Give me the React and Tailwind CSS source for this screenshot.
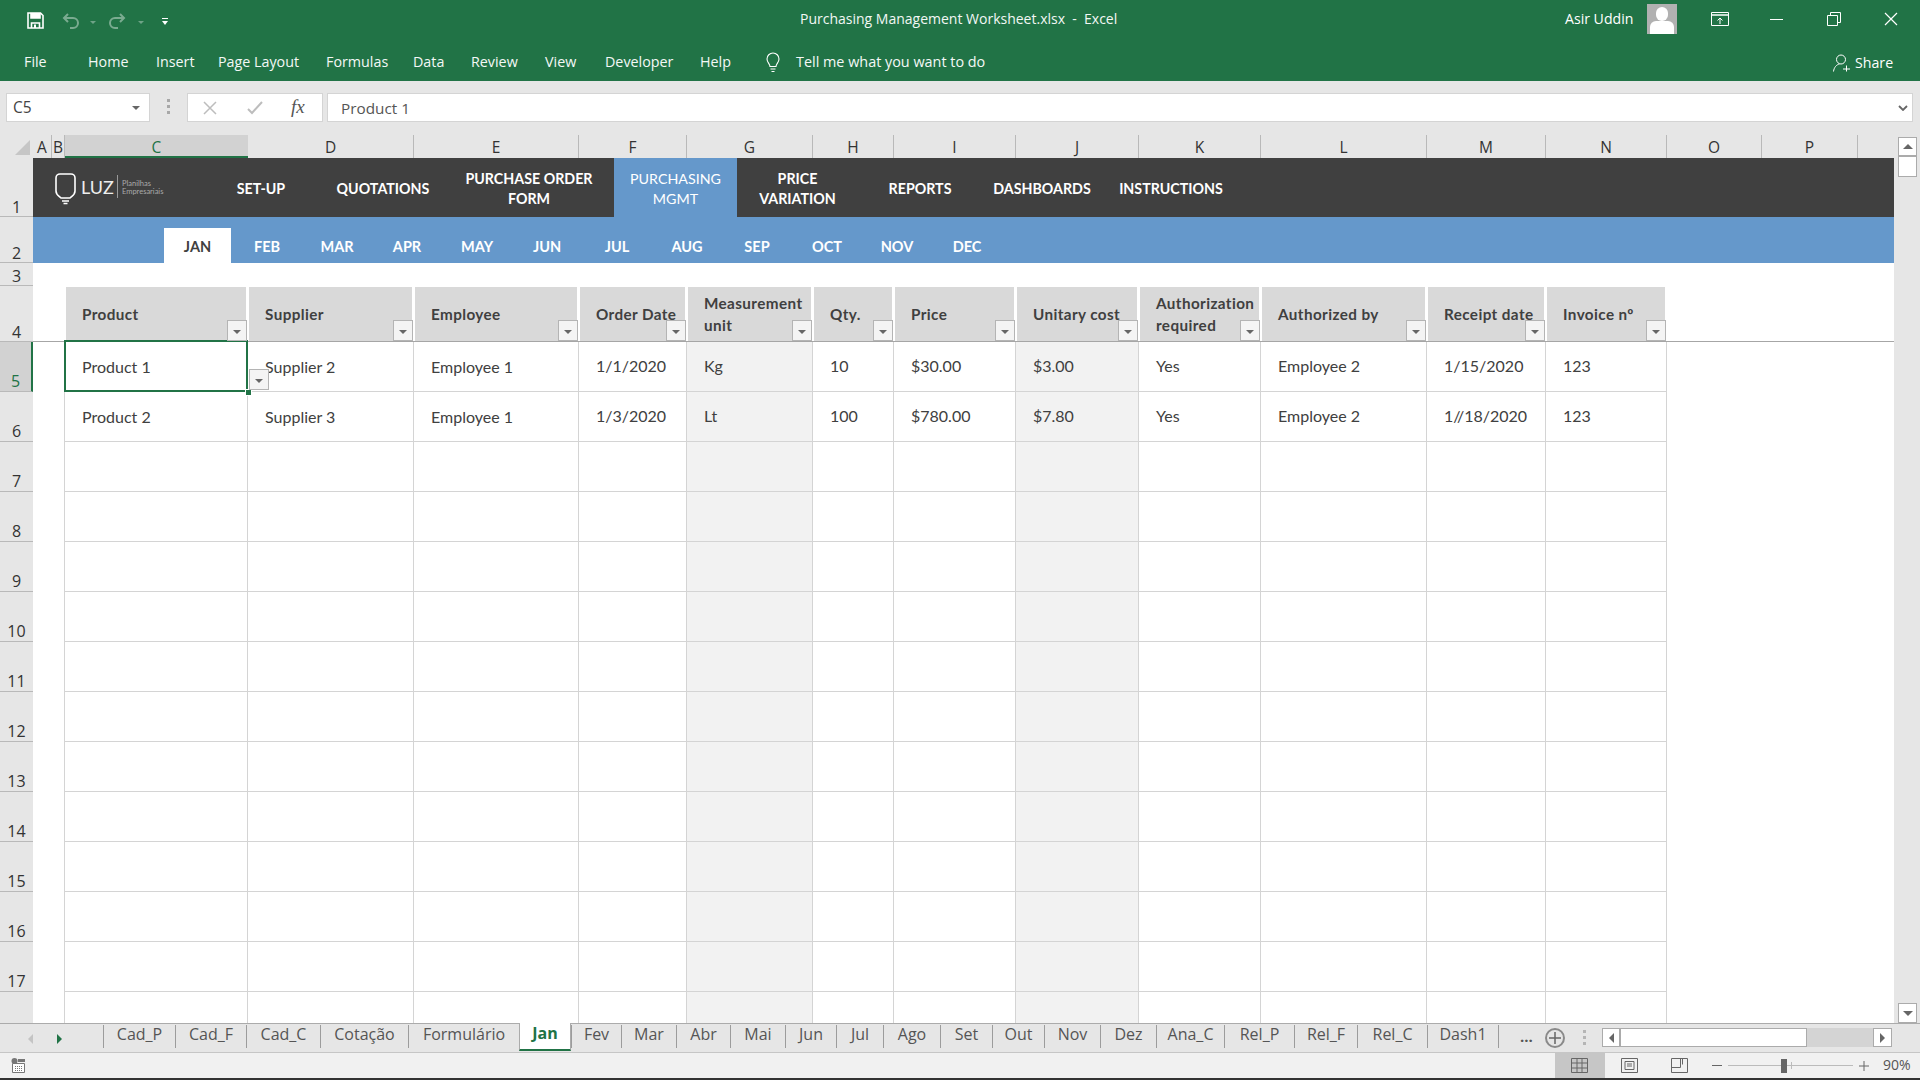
const font = { fontFamily: '"Open Sans", "Noto Sans", sans-serif' };

const ribbon = [
  ["File", "w-[64px]"],
  ["Home", "w-[68px]"],
  ["Insert", "w-[62px]"],
  ["Page Layout", "w-[108px]"],
  ["Formulas", "w-[87px]"],
  ["Data", "w-[58px]"],
  ["Review", "w-[74px]"],
  ["View", "w-[60px]"],
  ["Developer", "w-[95px]"],
  ["Help", "w-[65px]"],
];

const columns = [
  ["A", "w-[19px]"],
  ["B", "w-[13px]"],
  ["C", "w-[183px]"],
  ["D", "w-[166px]"],
  ["E", "w-[165px]"],
  ["F", "w-[108px]"],
  ["G", "w-[126px]"],
  ["H", "w-[81px]"],
  ["I", "w-[122px]"],
  ["J", "w-[123px]"],
  ["K", "w-[122px]"],
  ["L", "w-[166px]"],
  ["M", "w-[119px]"],
  ["N", "w-[121px]"],
  ["O", "w-[95px]"],
  ["P", "w-[96px]"],
];

const nav = [
  ["SET-UP", "w-[122px]"],
  ["QUOTATIONS", "w-[122px]"],
  ["PURCHASE ORDER\nFORM", "w-[170px]"],
  ["PURCHASING\nMGMT", "w-[123px] bg-[#6598cb] font-normal"],
  ["PRICE\nVARIATION", "w-[121px]"],
  ["REPORTS", "w-[124px]"],
  ["DASHBOARDS", "w-[120px]"],
  ["INSTRUCTIONS", "w-[138px]"],
];

const months = ["FEB", "MAR", "APR", "MAY", "JUN", "JUL", "AUG", "SEP", "OCT", "NOV", "DEC"];

const headers = [
  "Product",
  "Supplier",
  "Employee",
  "Order Date",
  "Measurement\nunit",
  "Qty.",
  "Price",
  "Unitary cost",
  "Authorization\nrequired",
  "Authorized by",
  "Receipt date",
  "Invoice nº",
];

const rows = [
  ["Product 1", "Supplier 2", "Employee 1", "1/1/2020", "Kg", "10", "$30.00", "$3.00", "Yes", "Employee 2", "1/15/2020", "123"],
  ["Product 2", "Supplier 3", "Employee 1", "1/3/2020", "Lt", "100", "$780.00", "$7.80", "Yes", "Employee 2", "1//18/2020", "123"],
];

const tabs = [
  ["Cad_P", "w-[72px]"],
  ["Cad_F", "w-[71px]"],
  ["Cad_C", "w-[74px]"],
  ["Cotação", "w-[88px]"],
  ["Formulário", "w-[111px]"],
  ["Jan", "w-[52px]"],
  ["Fev", "w-[50px]"],
  ["Mar", "w-[55px]"],
  ["Abr", "w-[54px]"],
  ["Mai", "w-[55px]"],
  ["Jun", "w-[51px]"],
  ["Jul", "w-[47px]"],
  ["Ago", "w-[57px]"],
  ["Set", "w-[52px]"],
  ["Out", "w-[52px]"],
  ["Nov", "w-[56px]"],
  ["Dez", "w-[56px]"],
  ["Ana_C", "w-[68px]"],
  ["Rel_P", "w-[70px]"],
  ["Rel_F", "w-[63px]"],
  ["Rel_C", "w-[70px]"],
  ["Dash1", "w-[72px]"],
];

const gridCols = "grid grid-cols-[183px_166px_165px_108px_126px_81px_122px_123px_122px_166px_119px_121px]";

function Arrow({ className = "" }) {
  return <div className={"w-0 h-0 border-x-[4px] border-x-transparent border-t-[4px] border-t-[#666] " + className} />;
}

function FilterButton({ className = "" }) {
  return (
    <div className={"absolute w-[20px] h-[21px] bg-[#f4f4f4] border border-[#b4b4b4] flex items-center justify-center " + className}>
      <Arrow className="mt-[2px]" />
    </div>
  );
}

function TitleBar() {
  return (
    <div className="h-[81px] bg-[#217346] text-white relative shrink-0">
      <svg className="absolute left-[27px] top-[12px]" width="17" height="17" viewBox="0 0 17 17" fill="none" stroke="#fff" strokeWidth="1.6">
        <path d="M1 1h12.5L16 3.5V16H1z" />
        <path d="M4 1v5h9V1" fill="#fff" />
        <path d="M4.5 16v-5h8v5" />
        <path d="M7 12.5h2v3.5H7z" fill="#fff" stroke="none" />
      </svg>
      <svg className="absolute left-[62px] top-[13px] opacity-40" width="18" height="16" viewBox="0 0 18 16" fill="none" stroke="#fff" strokeWidth="2">
        <path d="M6 1L2 5l4 4" />
        <path d="M2 5h9a5 5 0 0 1 0 10H8" />
      </svg>
      <svg className="absolute left-[108px] top-[13px] opacity-40" width="18" height="16" viewBox="0 0 18 16" fill="none" stroke="#fff" strokeWidth="2">
        <path d="M12 1l4 4-4 4" />
        <path d="M16 5H7a5 5 0 0 0 0 10h3" />
      </svg>
      <div className="absolute left-[90px] top-[21px] w-0 h-0 border-x-[3px] border-x-transparent border-t-[3px] border-t-[#6fa387]" />
      <div className="absolute left-[138px] top-[21px] w-0 h-0 border-x-[3px] border-x-transparent border-t-[3px] border-t-[#6fa387]" />
      <div className="absolute left-[162px] top-[18px] w-[6px] h-[1px] bg-white" />
      <div className="absolute left-[162px] top-[21px] w-0 h-0 border-x-[3px] border-x-transparent border-t-[4px] border-t-white" />

      <div className="absolute left-[800px] top-[9px] text-[14px] leading-[20px] whitespace-pre text-[#f2f7f4]">
        Purchasing Management Worksheet.xlsx  -  Excel
      </div>
      <div className="absolute left-[1565px] top-[9px] text-[14.100px] leading-[20px]">Asir Uddin</div>
      <div className="absolute left-[1647px] top-[4px] w-[30px] h-[30px] bg-[#b1b1b1] overflow-hidden">
        <div className="absolute left-[9px] top-[3px] w-[12px] h-[14px] rounded-full bg-white" />
        <div className="absolute left-[3px] top-[17px] w-[24px] h-[13px] rounded-t-[6px] bg-white" />
      </div>
      <svg className="absolute left-[1711px] top-[12px]" width="18" height="14" viewBox="0 0 18 14" fill="none" stroke="#fff" strokeWidth="1">
        <path d="M.5 .5h17v13H.5z" />
        <path d="M.5 3h17" strokeWidth="1.5" />
        <path d="M9 12V6M6.5 8.5L9 6l2.500 2.500" />
      </svg>
      <div className="absolute left-[1770px] top-[19px] w-[13px] h-[1px] bg-white" />
      <svg className="absolute left-[1827px] top-[12px]" width="14" height="14" viewBox="0 0 14 14" fill="none" stroke="#fff" strokeWidth="1">
        <path d="M.5 3.500h10v10H.5z" />
        <path d="M3.500 3.500V.5h10v10h-3" />
      </svg>
      <svg className="absolute left-[1884px] top-[12px]" width="14" height="14" viewBox="0 0 14 14" fill="none" stroke="#fff" strokeWidth="1.2">
        <path d="M1 1l12 12M13 1L1 13" />
      </svg>

      <div className="absolute left-[24px] top-[51px] flex text-[14.300px] leading-[22px] text-[#f4f8f6]">
        {ribbon.map(([label, w]) => (
          <div key={label} className={w}>{label}</div>
        ))}
      </div>
      <svg className="absolute left-[765px] top-[52px]" width="16" height="21" viewBox="0 0 16 21" fill="none" stroke="#fff" strokeWidth="1.1">
        <path d="M5 14.500C5 12 2 10.500 2 7a6 6 0 0 1 12 0c0 3.500-3 5-3 7.500z" />
        <path d="M5.500 17h5M6.500 19.500h3" />
      </svg>
      <div className="absolute left-[796px] top-[51px] text-[14.400px] leading-[22px] text-[#f4f8f6]">Tell me what you want to do</div>
      <svg className="absolute left-[1833px] top-[54px]" width="18" height="18" viewBox="0 0 18 18" fill="none" stroke="#fff" strokeWidth="1">
        <circle cx="8" cy="5.500" r="4.500" />
        <path d="M.5 17.500c.5-4 3-7 6-7.500M10 15h7M13.500 11.500v6" />
      </svg>
      <div className="absolute left-[1855px] top-[52px] text-[14.200px] leading-[22px]">Share</div>
    </div>
  );
}

function FormulaBar() {
  return (
    <div className="h-[54px] shrink-0 relative bg-[#e6e6e6]">
      <div className="absolute left-[6px] top-[12px] w-[144px] h-[29px] bg-white border border-[#d4d4d4] flex items-center justify-between pl-[6px] pr-[9px] pt-[1px] text-[15.500px] text-[#444]">
        <span>C5</span>
        <Arrow />
      </div>
      <div className="absolute left-[167px] top-[18px] flex flex-col gap-[3px]">
        <div className="w-[3px] h-[3px] bg-[#a8a8a8]" />
        <div className="w-[3px] h-[3px] bg-[#a8a8a8]" />
        <div className="w-[3px] h-[3px] bg-[#a8a8a8]" />
      </div>
      <div className="absolute left-[187px] top-[12px] w-[136px] h-[29px] bg-white border border-[#d4d4d4]">
        <svg className="absolute left-[15px] top-[7px]" width="14" height="14" viewBox="0 0 14 14" fill="none" stroke="#bdbdbd" strokeWidth="1.500">
          <path d="M1 1l12 12M13 1L1 13" />
        </svg>
        <svg className="absolute left-[59px] top-[7px]" width="16" height="14" viewBox="0 0 16 14" fill="none" stroke="#bdbdbd" strokeWidth="2">
          <path d="M1 8l4 4L15 1" />
        </svg>
        <span className="absolute left-[103px] top-[2px] text-[#555] text-[19px] italic leading-[22px]" style={{ fontFamily: '"Liberation Serif", serif' }}>fx</span>
      </div>
      <div className="absolute left-[327px] top-[12px] right-[7px] h-[29px] bg-white border border-[#d4d4d4] flex items-center justify-between pl-[13px] pr-[4px] pt-[1px] text-[15.300px] text-[#555]">
        <span>Product 1</span>
        <svg width="10" height="6" viewBox="0 0 10 6" fill="none" stroke="#666" strokeWidth="1.800">
          <path d="M1 1l4 4 4-4" />
        </svg>
      </div>
    </div>
  );
}

function ColumnHeaders() {
  return (
    <div className="h-[23px] shrink-0 flex relative bg-[#e6e6e6] text-[15.500px] leading-[24px] text-[#333]">
      <div className="w-[33px] relative">
        <div className="absolute left-[15px] top-[5px] w-0 h-0 border-l-[15px] border-l-transparent border-b-[15px] border-b-[#c6c6c6]" />
      </div>
      {columns.map(([label, w]) =>
        label === "C" ? (
          <div key={label} className={w + " text-center bg-[#d2d2d2] border-b-2 border-[#217346] text-[#217346]"}>{label}</div>
        ) : (
          <div key={label} className={w + " text-center border-r border-[#b9b9b9]"}>{label}</div>
        )
      )}
    </div>
  );
}

function RowHeaders() {
  const heights = [
    ["1", "h-[59px]"],
    ["2", "h-[46px]"],
    ["3", "h-[23px]"],
    ["4", "h-[56px]"],
    ["5", "h-[50px]"],
  ];
  const rest = ["6", "7", "8", "9", "10", "11", "12", "13", "14", "15", "16", "17"];
  return (
    <div className="w-[33px] shrink-0 bg-[#e6e6e6] text-[16px] leading-[18px] text-[#333] text-center flex flex-col">
      {heights.map(([n, h]) =>
        n === "5" ? (
          <div key={n} className={h + " flex items-end justify-center pb-[1px] bg-[#d2d2d2] text-[#217346] border-r-2 border-[#217346] border-b border-b-[#b9b9b9]"}>{n}</div>
        ) : (
          <div key={n} className={h + " flex items-end justify-center border-b border-[#b9b9b9]"}>{n}</div>
        )
      )}
      {rest.map((n) => (
        <div key={n} className="h-[50px] flex items-end justify-center pb-[1px] border-b border-[#b9b9b9]">{n}</div>
      ))}
    </div>
  );
}

function Logo() {
  return (
    <div className="w-[167px] relative font-normal">
      <svg className="absolute left-[22px] top-[15px]" width="21" height="32" viewBox="0 0 21 32" fill="none" stroke="#fff" strokeWidth="1.600">
        <path d="M5 1h11a4 4 0 0 1 4 4v13c0 4-3 5-5 7H6c-2-2-5-3-5-7V5a4 4 0 0 1 4-4z" />
        <path d="M7 28h7M8.500 30.500h4" />
      </svg>
      <span className="absolute left-[48px] top-[15px] text-[18px] leading-[28px] text-[#eee]">LUZ</span>
      <div className="absolute left-[84px] top-[17px] w-[1px] h-[23px] bg-[#999]" />
      <div className="absolute left-[89px] top-[22px] text-[7.500px] leading-[8px] text-[#aaa]">
        <div>Planilhas</div>
        <div>Empresariais</div>
      </div>
    </div>
  );
}

function Sheet() {
  const emptyRows = Array.from({ length: 13 }, (_, i) => i);
  return (
    <div className="flex-1 relative overflow-hidden bg-white" style={{ fontFamily: 'Lato, sans-serif' }}>
      {/* top menu */}
      <div className="h-[59px] flex bg-[#404040] text-white text-[14.250px] font-bold leading-[20px]">
        <Logo />
        {nav.map(([label, cls]) => (
          <div key={label} className={cls + " flex items-center justify-center text-center whitespace-pre-line pt-[2px]"}>{label}</div>
        ))}
      </div>
      {/* month bar */}
      <div className="h-[46px] bg-[#6598cb] flex items-end pl-[131px] text-white text-[14.500px] font-bold">
        <div className="w-[67px] h-[35px] bg-white text-[#404040] flex items-center justify-center pt-[2px]">JAN</div>
        <div className="w-[1px]" />
        {months.map((m) => (
          <div key={m} className="w-[70px] h-[35px] flex items-center justify-center pt-[2px]">{m}</div>
        ))}
      </div>
      <div className="h-[23px]" />
      {/* table header */}
      <div className="h-[56px] border-b border-[#a6a6a6] pl-[32px]">
        <div className={gridCols + " h-full w-[1601px]"}>
          {headers.map((h) => (
            <div key={h} className="relative ml-[1px] mr-[2px] mt-[1px] bg-[#d9d9d9] pl-[16px] flex items-center text-[15.250px] tracking-[0.4px] font-bold leading-[22px] text-[#404040] whitespace-pre-line">
              {h}
              <FilterButton className="-right-[1px] bottom-0 z-10" />
            </div>
          ))}
        </div>
      </div>
      {/* data rows */}
      <div className="pl-[31px]">
        <div className="w-[1602px] border-l border-[#d4d4d4]">
          {rows.map((row, i) => (
            <div key={i} className={gridCols + " h-[50px]"}>
              {row.map((cell, j) => (
                <div key={j} className={"flex items-center pl-[17px] text-[16px] text-[#404040] border-r border-b border-[#d4d4d4]" + (j > 2 ? " pb-[2px]" : "") + (j === 4 || j === 7 ? " bg-[#f2f2f2]" : "")}>
                  {cell}
                </div>
              ))}
            </div>
          ))}
          {emptyRows.map((r) => (
            <div key={r} className={gridCols + " h-[50px]"}>
              {headers.map((h, j) => (
                <div key={h} className={"border-r border-b border-[#d4d4d4]" + (j === 4 || j === 7 ? " bg-[#f2f2f2]" : "")} />
              ))}
            </div>
          ))}
        </div>
      </div>
      {/* active cell */}
      <div className="absolute left-[31px] top-[182px] w-[184px] h-[52px] border-2 border-[#217346]" />
      <div className="absolute left-[212px] top-[231px] w-[5px] h-[5px] bg-[#217346] border border-white box-content" />
      <FilterButton className="left-[216px] top-[211px]" />
    </div>
  );
}

function VerticalScroll() {
  return (
    <div className="absolute left-[1894px] top-[135px] w-[26px] h-[888px] bg-[#e6e6e6]">
      <div className="absolute left-[4px] top-[2px] w-[19px] h-[19px] bg-white border border-[#ababab] flex items-center justify-center">
        <div className="w-0 h-0 border-x-[5px] border-x-transparent border-b-[5px] border-b-[#666]" />
      </div>
      <div className="absolute left-[4px] top-[21px] w-[19px] h-[21px] bg-white border border-[#ababab]" />
      <div className="absolute left-[4px] bottom-0 w-[19px] h-[20px] bg-white border border-[#ababab] flex items-center justify-center">
        <div className="w-0 h-0 border-x-[5px] border-x-transparent border-t-[5px] border-t-[#666]" />
      </div>
    </div>
  );
}

function TabBar() {
  return (
    <div className="h-[30px] shrink-0 relative bg-[#e6e6e6] border-t border-[#ababab] border-b border-b-[#c6c6c6]">
      <div className="absolute left-[28px] top-[10px] w-0 h-0 border-y-[5px] border-y-transparent border-r-[5px] border-r-[#c4c4c4]" />
      <div className="absolute left-[57px] top-[10px] w-0 h-0 border-y-[5px] border-y-transparent border-l-[5px] border-l-[#217346]" />
      <div className="absolute left-[103px] top-0 h-[27px] flex text-[16px] text-[#555] leading-[18px]">
        {tabs.map(([label, w]) =>
          label === "Jan" ? (
            <div key={label} className={w + " h-[28px] -mt-[1px] pt-[1px] bg-white text-center font-bold text-[#217346] border-x border-[#ababab] border-b-2 border-b-[#217346]"}>{label}</div>
          ) : (
            <div key={label} className={w + " h-[23px] mt-[1px] text-center border-l border-[#9c9c9c] last:border-r"}>{label}</div>
          )
        )}
      </div>
      <div className="absolute left-[1520px] top-[1px] text-[15px] leading-[22px] text-[#555] font-bold">...</div>
      <div className="absolute left-[1545px] top-[4px] w-[20px] h-[20px] rounded-full border-2 border-[#8a8a8a] flex items-center justify-center text-[#666]">
        <svg width="12" height="12" viewBox="0 0 12 12" stroke="#666" strokeWidth="1.500"><path d="M6 0v12M0 6h12" /></svg>
      </div>
      <div className="absolute left-[1583px] top-[6px] flex flex-col gap-[3px]">
        <div className="w-[3px] h-[3px] bg-[#b5b5b5]" />
        <div className="w-[3px] h-[3px] bg-[#b5b5b5]" />
        <div className="w-[3px] h-[3px] bg-[#b5b5b5]" />
      </div>
      <div className="absolute left-[1602px] top-[4px] w-[290px] h-[19px] flex bg-[#d4d4d4]">
        <div className="w-[18px] bg-white border border-[#ababab] flex items-center justify-center">
          <div className="w-0 h-0 border-y-[5px] border-y-transparent border-r-[5px] border-r-[#666]" />
        </div>
        <div className="w-[187px] bg-white border border-[#ababab]" />
        <div className="flex-1" />
        <div className="w-[19px] bg-white border border-[#ababab] flex items-center justify-center">
          <div className="w-0 h-0 border-y-[5px] border-y-transparent border-l-[5px] border-l-[#666]" />
        </div>
      </div>
    </div>
  );
}

function StatusBar() {
  return (
    <div className="h-[25px] shrink-0 relative bg-[#f1f1f1]">
      <svg className="absolute left-[11px] top-[5px]" width="15" height="15" viewBox="0 0 15 15" fill="none">
        <circle cx="3.500" cy="3" r="3" fill="#777" />
        <path d="M7 1h7v3H7z" fill="#777" />
        <path d="M1.500 5.500h12v9h-12z" fill="#fff" stroke="#777" />
        <path d="M4 8.500h7M4 10.500h7M4 12.500h7" stroke="#777" strokeDasharray="1 1" />
      </svg>
      <div className="absolute left-[1555px] top-0 w-[50px] h-[25px] bg-[#c6c6c6] flex items-center justify-center pr-[2px]">
        <svg width="17" height="15" viewBox="0 0 17 15" fill="none" stroke="#666">
          <path d="M.5 .5h16v14H.5zM.5 5h16M.5 10h16M6 .5v14M11 .5v14" />
        </svg>
      </div>
      <svg className="absolute left-[1621px] top-[5px]" width="17" height="15" viewBox="0 0 17 15" fill="none" stroke="#666">
        <path d="M.5 .5h16v14H.5z" />
        <path d="M4 3.500h9v8H4zM6 6h5M6 8h5" />
      </svg>
      <svg className="absolute left-[1671px] top-[5px]" width="17" height="15" viewBox="0 0 17 15" fill="none" stroke="#666">
        <path d="M.5 .5h16v14H.5z" />
        <path d="M.5 9.500h9V.5M11.500 .5v6" />
      </svg>
      <div className="absolute left-[1712px] top-[12px] w-[10px] h-[1px] bg-[#666]" />
      <div className="absolute left-[1728px] top-[12px] w-[125px] h-[1px] bg-[#bbb]" />
      <div className="absolute left-[1791px] top-[9px] w-[1px] h-[7px] bg-[#bbb]" />
      <div className="absolute left-[1781px] top-[6px] w-[6px] h-[14px] bg-[#666]" />
      <svg className="absolute left-[1859px] top-[8px]" width="10" height="10" viewBox="0 0 10 10" stroke="#666"><path d="M5 0v10M0 5h10" /></svg>
      <div className="absolute left-[1883px] top-[2px] text-[14px] leading-[20px] text-[#555]">90%</div>
    </div>
  );
}

export default function App() {
  return (
    <div className="w-[1920px] h-[1080px] overflow-hidden flex flex-col relative bg-[#e6e6e6]" style={font}>
      <TitleBar />
      <FormulaBar />
      <ColumnHeaders />
      <div className="h-[865px] shrink-0 flex overflow-hidden">
        <RowHeaders />
        <Sheet />
        <div className="w-[26px] shrink-0" />
      </div>
      <VerticalScroll />
      <TabBar />
      <StatusBar />
      <div className="h-[2px] bg-[#333] shrink-0" />
    </div>
  );
}
